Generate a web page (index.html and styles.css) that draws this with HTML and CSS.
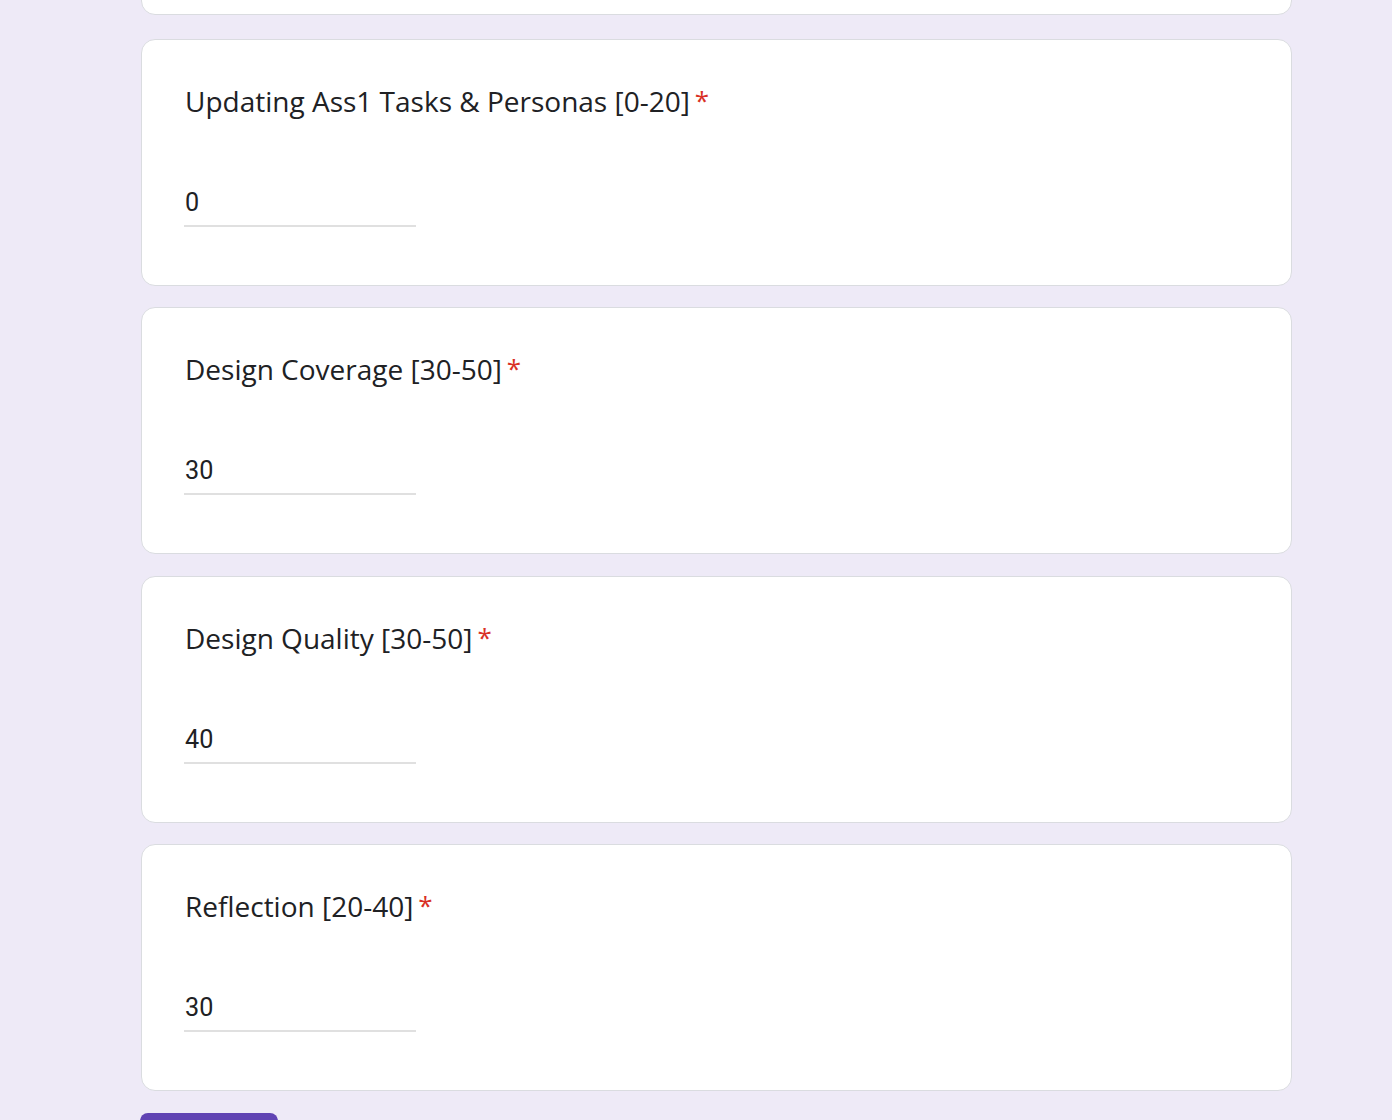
FILE: index.html
```html
<!DOCTYPE html>
<html lang="en">
<head>
<meta charset="utf-8">
<title>Form</title>
<link rel="stylesheet" href="styles.css">
</head>
<body>
<div class="form">
  <div class="card card-partial"></div>

  <div class="card question">
    <div class="q-title">Updating Ass1 Tasks &amp; Personas [0-20]<span class="req">*</span></div>
    <div class="q-input"><span class="value">0</span></div>
  </div>

  <div class="card question">
    <div class="q-title">Design Coverage [30-50]<span class="req">*</span></div>
    <div class="q-input"><span class="value">30</span></div>
  </div>

  <div class="card question">
    <div class="q-title">Design Quality [30-50]<span class="req">*</span></div>
    <div class="q-input"><span class="value">40</span></div>
  </div>

  <div class="card question">
    <div class="q-title">Reflection [20-40]<span class="req">*</span></div>
    <div class="q-input"><span class="value">30</span></div>
  </div>

  <div class="actions">
    <button class="submit" type="button">Submit</button>
  </div>
</div>
</body>
</html>
```

FILE: styles.css
```css
html, body {
  margin: 0;
  padding: 0;
}

body {
  background: #eeeaf7;
  font-family: Roboto, "Liberation Sans", Arial, sans-serif;
  color: #202124;
  overflow: hidden;
  height: 1120px;
}

.form {
  width: 1151px;
  margin-left: 141px;
  margin-top: -100px;
  display: flex;
  flex-direction: column;
}

.card {
  flex-shrink: 0;
  background: #ffffff;
  border: 1px solid #dadce0;
  border-radius: 14px;
  box-sizing: border-box;
}

.card-partial {
  height: 115px;
  margin-bottom: 24px;
}

.question {
  height: 246.8px;
  margin-bottom: 21.6px;
  padding: 38px 43px 0 43px;
}

.q-title {
  font-family: "Open Sans", Roboto, sans-serif;
  font-size: 28px;
  line-height: 44px;
  color: #202124;
  letter-spacing: 0;
}

.req {
  color: #d93025;
  margin-left: 5px;
  font-size: 26px;
  vertical-align: 2px;
}

.q-input {
  margin-top: 62px;
  margin-left: -1px;
  width: 232px;
  padding-left: 1px;
  border-bottom: 2px solid #e0e0e0;
  height: 42px;
  box-sizing: border-box;
  font-family: Roboto, sans-serif;
  font-size: 25.2px;
  line-height: 36px;
  color: #202124;
}

.actions {
  flex-shrink: 0;
}

.submit {
  display: block;
  width: 138px;
  height: 65px;
  margin-left: -1px;
  padding: 34px 0 0 0;
  border: none;
  border-radius: 8px;
  background: #6043b3;
  color: #ffffff;
  font-family: Roboto, sans-serif;
  font-size: 25px;
  line-height: 26px;
  overflow: hidden;
}
```
